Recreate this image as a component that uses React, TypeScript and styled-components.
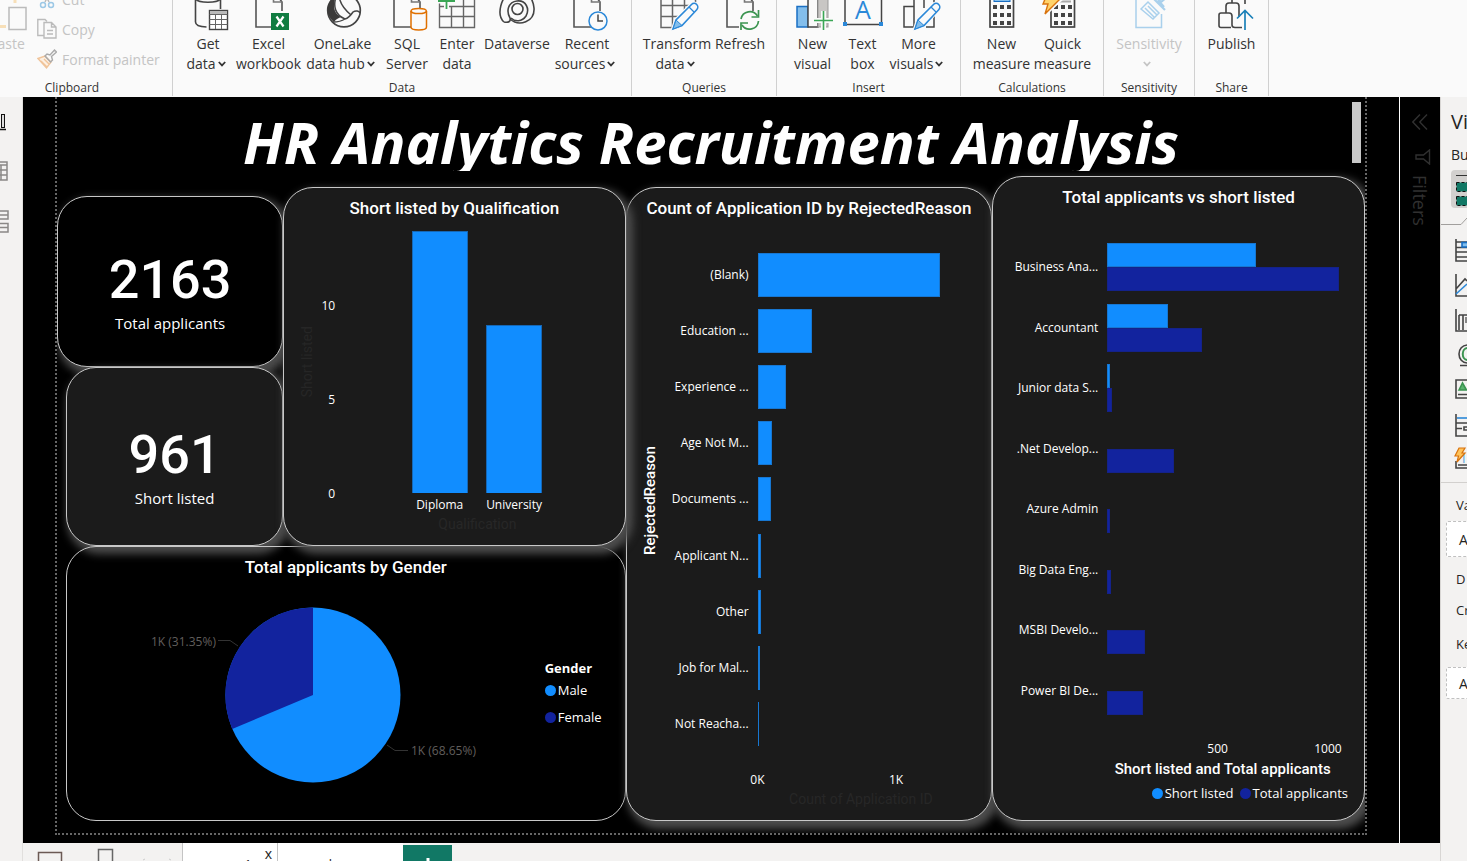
import React from "react";
import styled, { createGlobalStyle } from "styled-components";

const UI = `"Open Sans", "Noto Sans", sans-serif`;
const DIN = `Roboto, "Liberation Sans", sans-serif`;
const BRIGHT = "#118dff";
const NAVY = "#12239e";

const Global = createGlobalStyle`
  *, *::before, *::after { box-sizing: border-box; }
  body { margin: 0; font-family: ${UI}; background: #f3f2f1; }
  button { font: inherit; color: inherit; border: 0; padding: 0; background: none; }
  h1, h2, h3, p, ul, ol, dl, dd, dt { margin: 0; padding: 0; font-weight: inherit; font-size: inherit; }
  li { list-style: none; }
`;

const Shell = styled.div`
  display: flex;
  flex-direction: column;
  height: 100vh;
  overflow: hidden;
`;

/* ---------- ribbon ---------- */

const Ribbon = styled.header`
  display: flex;
  align-items: flex-end;
  flex: none;
  height: 97px;
  overflow: hidden;
  background: #fafafa;
  color: #333;
`;

const Group = styled.section<{ $w: number; $pull?: number }>`
  display: flex;
  flex-direction: column;
  justify-content: flex-end;
  flex: none;
  width: ${(p) => p.$w}px;
  height: 120px;
  margin-left: ${(p) => (p.$pull ? -p.$pull : 0)}px;
  margin-bottom: 1px;
  border-right: 1px solid #d0d0d0;
`;

const GroupBody = styled.div`
  display: flex;
  align-items: flex-start;
  justify-content: center;
`;

const GroupName = styled.h2`
  font-size: 12px;
  line-height: 16px;
  margin-top: 6px;
  text-align: center;
`;

const Tool = styled.button<{ $w: number; $off?: boolean }>`
  display: flex;
  flex-direction: column;
  align-items: center;
  width: ${(p) => p.$w}px;
  height: 80px;
  font-size: 14px;
  line-height: 20px;
  white-space: nowrap;
  color: ${(p) => (p.$off ? "#c4c4c4" : "#333")};
  svg { flex: none; overflow: visible; }
`;

const ToolIcon = styled.svg`
  width: 40px;
  height: 36px;
  margin-bottom: 4px;
`;

const ToolLine = styled.span<{ $menu?: boolean }>`
  display: flex;
  align-items: center;
  gap: 2px;
  height: 20px;
  padding-right: ${(p) => (p.$menu ? 4 : 0)}px;
`;

const ClipBody = styled(GroupBody)`
  justify-content: flex-start;
  align-items: flex-end;
  padding-left: 15px;
`;

const ClipList = styled.div`
  display: flex;
  flex-direction: column;
  margin-left: 10px;
`;

const ClipButton = styled.button`
  display: flex;
  align-items: center;
  gap: 5px;
  height: 30px;
  font-size: 14px;
  color: #c4c4c4;
`;

const Chevron = () => (
  <svg width="8" height="6" viewBox="0 0 8 6" fill="none" stroke="currentColor" strokeWidth="1.8">
    <path d="M.8 1 4 4.4 7.2 1" />
  </svg>
);

const Doc = () => (
  <g fill="none" stroke="#555" strokeWidth="1.6">
    <path d="M24 33H7V-4H24L33 8V17" />
    <path d="M24.500-4V8H33" stroke="#777" />
  </g>
);

const Pencil = () => (
  <g>
    <path d="M16 35l3-9L34.500 10.500a3.500 3.500 0 0 1 5 5L25 31z" fill="#fafafa" stroke="#fafafa" strokeWidth="4" />
    <path d="M16 35l3-9L34.500 10.500a3.500 3.500 0 0 1 5.200 5.200L25 31.500z" fill="#fafafa" stroke="#2b88d8" strokeWidth="1.600" />
    <path d="M16 35l3-9 6 5.500z" fill="#83beec" stroke="#2b88d8" />
    <path d="M32 13l5 5" stroke="#2b88d8" strokeWidth="1.300" />
  </g>
);

const CalcKeys = () => (
  <g fill="#444">
    {[11, 19, 27].map((y) => [11, 18, 25].map((x) => <rect key={`${x}-${y}`} x={x} y={y} width="4" height="4" />))}
  </g>
);

const icons: Record<string, React.ReactNode> = {
  get: (
    <>
      <g fill="none" stroke="#444" strokeWidth="1.600">
        <path d="M7.500 3V28c0 3 5 4.800 11 5M32.500 3V15" />
        <path d="M7.500 4c0 5.600 25 5.600 25 0" />
      </g>
      <rect x="21.500" y="16.500" width="18" height="19" fill="#fff" stroke="#444" strokeWidth="1.400" />
      <rect x="22" y="17" width="17" height="3.500" fill="#bbb" />
      <path d="M21.500 20.500h18M21.500 25.500h18M21.500 30.500h18M27.500 20v15M33.500 20v15" stroke="#666" fill="none" />
    </>
  ),
  excel: (
    <>
      <Doc />
      <rect x="22" y="19" width="18" height="17" fill="#107c41" />
      <path d="M27.500 22.500l7 10M34.500 22.500l-7 10" stroke="#fff" strokeWidth="2.200" />
    </>
  ),
  lake: (
    <>
      <circle cx="21" cy="16.500" r="16.300" fill="none" stroke="#444" strokeWidth="1.700" />
      <path d="M10 4C2 11 3 22 11 28c2-3 5-4 7-5C11 20 9 11 13 3z" fill="#3b3a39" />
      <path d="M13 3c-3 9-1 18 9 22 4-1 6-4 8-7 3-2 6-1 7 1M10 28c4 0 9-1 12-3M16 2c1 8 6 14 12 19" fill="none" stroke="#444" strokeWidth="1.500" />
    </>
  ),
  sql: (
    <>
      <Doc />
      <path d="M24 17v16c0 4 15.500 4 15.500 0V17" fill="#fafafa" stroke="#e07000" strokeWidth="1.500" />
      <ellipse cx="31.700" cy="17" rx="7.700" ry="2.600" fill="#fafafa" stroke="#e07000" strokeWidth="1.500" />
    </>
  ),
  enter: (
    <>
      <path d="M2.500 8V33.500h35V-2M2.500 22.500h35M14.500 12v21M26.500 0v33M2.500 12.500h35" fill="none" stroke="#666" strokeWidth="1.400" />
      <path d="M9.500-2v17M1 7h17" stroke="#fafafa" strokeWidth="5" />
      <path d="M9.500-2v17M1 7h17" stroke="#3aa655" strokeWidth="1.800" />
    </>
  ),
  verse: (
    <g fill="none" stroke="#444" strokeWidth="1.600">
      <circle cx="20.500" cy="15" r="5.500" />
      <path d="M7 28C-1 21 4 3 14-3M7 28c5 1 7-1 6-4-4-7-2-16 7-17 9-1 13 8 9 15-4 6-11 6-15 2" />
      <path d="M13 25c9 8 25 3 24-11C36 5 31-1 25-3" />
    </g>
  ),
  recent: (
    <>
      <Doc />
      <circle cx="31" cy="27" r="9" fill="#fafafa" stroke="#2b88d8" strokeWidth="1.500" />
      <path d="M31 20.500V27h5" fill="none" stroke="#444" strokeWidth="1.500" />
    </>
  ),
  transform: (
    <>
      <path d="M4 0V33.500H22M4 22.500h20M4 11.500h34M15.500 0v33M27.500 0v18M38.500 0v10" fill="none" stroke="#666" strokeWidth="1.500" />
      <Pencil />
    </>
  ),
  refresh: (
    <>
      <Doc />
      <rect x="19" y="17" width="21" height="19" fill="#fafafa" />
      <path d="M21 25a9 9 0 0 1 16.500-3M38.500 27a9 9 0 0 1-16.500 4" fill="none" stroke="#3b9450" strokeWidth="1.700" />
      <path d="M38.500 16v7h-7M21 36v-7h7" fill="none" stroke="#3b9450" strokeWidth="1.700" />
    </>
  ),
  visual: (
    <>
      <rect x="4" y="12.500" width="11" height="20.500" fill="#83beec" stroke="#1a6fc4" strokeWidth="1.500" />
      <rect x="15" y="-4" width="10" height="37" fill="#fafafa" stroke="#444" strokeWidth="1.500" />
      <rect x="25" y="0" width="10" height="33" fill="#c8c6c4" stroke="#999" />
      <path d="M30.500 17v19M21 26.500h19" stroke="#fafafa" strokeWidth="5" />
      <path d="M30.500 17v19M21 26.500h19" stroke="#3aa655" strokeWidth="1.600" />
    </>
  ),
  textbox: (
    <>
      <path d="M2 0V30.500H38.500V0" fill="none" stroke="#444" strokeWidth="1.500" />
      <rect x="0" y="28" width="4" height="4" fill="#2b88d8" />
      <rect x="36" y="28" width="4" height="4" fill="#2b88d8" />
      <text x="20" y="25" textAnchor="middle" fontSize="25" fontFamily={UI} fill="#2b88d8">A</text>
    </>
  ),
  more: (
    <>
      <g fill="none" stroke="#444" strokeWidth="1.500">
        <path d="M5 12.500h10V33H5zM15-4V33M25-4V14M25 0h10v10M27 33h8V22" />
      </g>
      <Pencil />
    </>
  ),
  measure: (
    <>
      <rect x="8" y="-4" width="23.500" height="37" fill="none" stroke="#444" strokeWidth="1.700" />
      <rect x="12" y="0" width="16" height="7.500" fill="#83beec" stroke="#1a6fc4" />
      <CalcKeys />
    </>
  ),
  quick: (
    <>
      <rect x="8" y="-4" width="23.500" height="37" fill="none" stroke="#444" strokeWidth="1.700" />
      <path d="M16 7.500h12" stroke="#aaa" strokeWidth="2" />
      <CalcKeys />
      <path d="M4-2h12l-4 7h6L2 20l3-10H0z" fill="#ffd36b" stroke="#fafafa" strokeWidth="4" />
      <path d="M5-2h11l-4 7h5L2 20l3-10H0z" fill="#ffd36b" stroke="#d9730d" strokeWidth="1.400" />
    </>
  ),
  sensitivity: (
    <g fill="none" stroke="#a9d0ec" strokeWidth="1.500">
      <path d="M7 0V33.500H32.500V20" />
      <path d="M12 15l7-7 11 11-6 6zM16 14l9 9M19 12l9 9" />
      <path d="M24 4l12 12M22-2l10 10 6-5M29 6l6 7" strokeWidth="2.200" />
    </g>
  ),
  publish: (
    <>
      <g fill="none" stroke="#444" strokeWidth="1.600">
        <path d="M19 33.500H9q-2 0-2-2V21q0-2 2-2h8q3 0 3 3v9q0 2.500 3 2.500h7" />
        <path d="M14 19v-7q0-3 3-3h7q3 0 3 3v11M20 9V0M33 0v10" />
      </g>
      <path d="M33 36V17M25 24.500L33 16.500l8 8" fill="none" stroke="#1a80b8" strokeWidth="1.700" />
    </>
  ),
  paste: (
    <>
      <path d="M28 0v9M0 32.500h19" fill="none" stroke="#f7dfb8" strokeWidth="3" />
      <rect x="22" y="13.500" width="17" height="22" fill="#fafafa" stroke="#bbb" strokeWidth="1.500" />
    </>
  ),
};

type ToolSpec = { icon: string; lines: string[]; w: number; menu?: boolean; off?: boolean };

const ribbonGroups: { name: string; w: number; tools: ToolSpec[] }[] = [
  {
    name: "Data",
    w: 459,
    tools: [
      { icon: "get", lines: ["Get", "data"], w: 50, menu: true },
      { icon: "excel", lines: ["Excel", "workbook"], w: 71 },
      { icon: "lake", lines: ["OneLake", "data hub"], w: 77, menu: true },
      { icon: "sql", lines: ["SQL", "Server"], w: 52 },
      { icon: "enter", lines: ["Enter", "data"], w: 48 },
      { icon: "verse", lines: ["Dataverse"], w: 72 },
      { icon: "recent", lines: ["Recent", "sources"], w: 68, menu: true },
    ],
  },
  {
    name: "Queries",
    w: 145,
    tools: [
      { icon: "transform", lines: ["Transform", "data"], w: 72, menu: true },
      { icon: "refresh", lines: ["Refresh"], w: 54 },
    ],
  },
  {
    name: "Insert",
    w: 184,
    tools: [
      { icon: "visual", lines: ["New", "visual"], w: 52 },
      { icon: "textbox", lines: ["Text", "box"], w: 48 },
      { icon: "more", lines: ["More", "visuals"], w: 64, menu: true },
    ],
  },
  {
    name: "Calculations",
    w: 143,
    tools: [
      { icon: "measure", lines: ["New", "measure"], w: 61 },
      { icon: "quick", lines: ["Quick", "measure"], w: 61 },
    ],
  },
  { name: "Sensitivity", w: 91, tools: [{ icon: "sensitivity", lines: ["Sensitivity", ""], w: 70, menu: true, off: true }] },
  { name: "Share", w: 74, tools: [{ icon: "publish", lines: ["Publish"], w: 54 }] },
];

const RibbonTool = ({ icon, lines, w, menu, off }: ToolSpec) => (
  <Tool $w={w} $off={off} disabled={off}>
    <ToolIcon viewBox="0 0 40 36">{icons[icon]}</ToolIcon>
    {lines.map((line, i) => {
      const last = menu && i === lines.length - 1;
      return (
        <ToolLine key={i} $menu={last}>
          {line}
          {last && <Chevron />}
        </ToolLine>
      );
    })}
  </Tool>
);

/* ---------- workspace ---------- */

const Workspace = styled.div`
  display: flex;
  flex: 1;
  min-height: 0;
`;

const Rail = styled.nav`
  display: flex;
  flex-direction: column;
  flex: none;
  gap: 26px;
  width: 23px;
  padding-top: 13px;
  overflow: hidden;
  border-right: 1px solid #e1dfdd;
  background: #f3f2f1;
`;

const RailButton = styled.button`
  width: 22px;
  height: 24px;
  svg { display: block; }
`;

const Center = styled.main`
  display: flex;
  flex-direction: column;
  flex: 1;
  min-width: 0;
`;

const Stage = styled.div`
  display: flex;
  flex: 1;
  min-height: 0;
  background: #000;
`;

const ReportArea = styled.div`
  display: flex;
  flex: 1;
  min-width: 0;
  padding: 0 32px 8px;
`;

const Page = styled.article`
  display: flex;
  flex-direction: column;
  flex: 1;
  min-width: 0;
  overflow: hidden;
  border: 2px dotted #666;
  border-top: 0;
  color: #fff;
`;

const TitleBox = styled.div`
  position: relative;
  flex: none;
  height: 74px;
  overflow: hidden;
`;

const Title = styled.h1`
  font: italic 700 58px/90px ${UI};
  text-align: center;
  white-space: nowrap;
`;

const Thumb = styled.div`
  position: absolute;
  top: 5px;
  right: 4px;
  width: 9px;
  height: 61px;
  background: #c8c8c8;
`;

const Board = styled.div`
  display: grid;
  grid-template-columns: 569fr 367fr 373fr;
  flex: 1;
  min-height: 0;
  padding-bottom: 12px;
`;

const LeftArea = styled.div`
  display: grid;
  grid-template-rows: minmax(0, 359fr) minmax(0, 275fr);
  min-width: 0;
  padding-top: 16px;
`;

const TopLeft = styled.div`
  display: grid;
  grid-template-columns: 226fr 342fr;
  min-height: 0;
`;

const CardStack = styled.div`
  display: grid;
  grid-template-rows: minmax(0, 171fr) minmax(0, 179fr);
  padding-top: 9px;
`;

const Visual = styled.section<{ $fill?: string; $glow?: boolean; $level?: number; $top?: number; $left?: number }>`
  position: relative;
  z-index: ${(p) => p.$level ?? 0};
  display: flex;
  flex-direction: column;
  min-width: 0;
  min-height: 0;
  margin-top: ${(p) => p.$top ?? 0}px;
  margin-left: ${(p) => p.$left ?? 0}px;
  border: 1px solid #c8c8c8;
  border-radius: 30px;
  background: ${(p) => p.$fill ?? "#1b1b1b"};
  box-shadow: ${(p) => (p.$glow ? "4px 5px 9px 3px #4d4d4d" : "none")};
`;

const Card = styled(Visual)`
  align-items: center;
  justify-content: center;
  padding-top: 23px;
`;

const Figure = styled.strong`
  font: 500 54px/56px ${DIN};
`;

const FigureName = styled.span`
  margin-top: 4px;
  font-size: 15px;
  line-height: 22px;
`;

const VisualTitle = styled.h2`
  flex: none;
  margin-top: 9px;
  font: 500 17px/22px ${DIN};
  text-align: center;
  white-space: nowrap;
`;

/* column chart */

const Columns = styled.div`
  display: grid;
  flex: none;
  height: 281px;
  margin-top: 12px;
  grid-template-rows: repeat(15, minmax(0, 1fr));
  grid-template-columns: 35px 16px 76fr 56fr 18fr 56fr 82fr;
  font-size: 12px;
`;

const YName = styled.div`
  grid-row: 1 / 15;
  grid-column: 1;
  display: flex;
  align-items: center;
  justify-content: center;
  padding-right: 10px;
  font: 400 14px/18px ${DIN};
  writing-mode: vertical-rl;
  transform: rotate(180deg);
  color: #262626;
`;

const YTick = styled.span<{ $row: number }>`
  grid-row: ${(p) => p.$row} / span 2;
  grid-column: 2;
  align-self: center;
  justify-self: end;
`;

const ColumnBar = styled.div<{ $col: number; $value: number }>`
  grid-row: ${(p) => 15 - p.$value} / 15;
  grid-column: ${(p) => p.$col};
  background: ${BRIGHT};
  border: 1px solid #1667b5;
  border-bottom: 0;
`;

const ColumnName = styled.span<{ $col: number }>`
  grid-row: 15;
  grid-column: ${(p) => p.$col};
  display: flex;
  justify-content: center;
  line-height: 24px;
`;

const FaintName = styled.p<{ $left: number; $top?: number }>`
  margin-top: ${(p) => p.$top ?? 0}px;
  margin-left: ${(p) => p.$left}px;
  font: 400 14px/18px ${DIN};
  text-align: center;
  color: #272727;
`;

/* bar charts */

const Bars = styled.ul<{ $top: number; $h: number }>`
  display: flex;
  flex-direction: column;
  flex: none;
  height: ${(p) => p.$h}px;
  margin-top: ${(p) => p.$top}px;
`;

const BarRow = styled.li<{ $label: number; $right: number }>`
  display: grid;
  grid-template-columns: ${(p) => p.$label}px 1fr;
  column-gap: 9px;
  align-items: center;
  flex: 1;
  padding-right: ${(p) => p.$right}px;
`;

const BarName = styled.span`
  font-size: 12px;
  line-height: 16px;
  text-align: right;
  white-space: nowrap;
`;

const Pair = styled.div`
  display: flex;
  flex-direction: column;
  align-items: flex-start;
`;

const Bar = styled.div<{ $h: number; $dark?: boolean }>`
  height: ${(p) => p.$h}px;
  background: ${(p) => (p.$dark ? NAVY : BRIGHT)};
  box-shadow: inset 0 0 0 1px ${(p) => (p.$dark ? "#14228a" : "#1777d2")};
`;

const Axis = styled.div<{ $left: number; $right: number; $n: number; $top: number }>`
  display: grid;
  grid-template-columns: repeat(${(p) => p.$n}, minmax(0, 1fr));
  margin: ${(p) => p.$top}px ${(p) => p.$right}px 0 ${(p) => p.$left}px;
  font-size: 12px;
  line-height: 18px;
`;

const AxisTick = styled.span<{ $at: number }>`
  grid-column: ${(p) => p.$at} / span 2;
  display: flex;
  justify-content: center;
`;

const RejectBody = styled.div`
  display: grid;
  grid-template-columns: 34px 1fr;
  flex: none;
`;

const RejectName = styled.div`
  display: flex;
  align-items: center;
  justify-content: center;
  padding: 0 12px 30px 0;
  font: 500 15px/20px ${DIN};
  writing-mode: vertical-rl;
  transform: rotate(180deg);
`;

const AxisName = styled.p`
  margin-left: 88px;
  font: 500 15px/22px ${DIN};
  text-align: center;
`;

const Legend = styled.ul<{ $column?: boolean }>`
  display: flex;
  flex-direction: ${(p) => (p.$column ? "column" : "row")};
  gap: ${(p) => (p.$column ? 7 : 6)}px;
  justify-content: flex-end;
  font-size: 13px;
  line-height: 20px;
`;

const LegendItem = styled.li<{ $color: string }>`
  display: flex;
  align-items: center;
  gap: 2px;
  white-space: nowrap;
  &::before {
    content: "";
    width: 11px;
    height: 11px;
    border-radius: 50%;
    background: ${(p) => p.$color};
  }
`;

const BottomLegend = styled.div`
  margin: 3px 16px 0 0;
`;

const PieRow = styled.div`
  display: flex;
  align-items: center;
  flex: 1;
  padding: 0 23px 8px 15px;
`;

const PieBox = styled.div`
  display: flex;
  justify-content: center;
  flex: 1;
  svg { overflow: visible; }
  text { font-size: 12px; font-family: ${UI}; fill: #605e5c; }
`;

const PieLegend = styled.div`
  padding-bottom: 6px;
`;

const LegendTitle = styled.h3`
  font-size: 13px;
  font-weight: 700;
  line-height: 22px;
  margin-bottom: 1px;
`;

const reasons: [string, number][] = [
  ["(Blank)", 1320],
  ["Education ...", 394],
  ["Experience ...", 202],
  ["Age Not M...", 102],
  ["Documents ...", 94],
  ["Applicant N...", 28],
  ["Other", 22],
  ["Job for Mal...", 18],
  ["Not Reacha...", 12],
];

const jobs: [string, number, number][] = [
  ["Business Ana...", 673, 1050],
  ["Accountant", 275, 430],
  ["Junior data S...", 12, 20],
  [".Net Develop...", 0, 304],
  ["Azure Admin", 0, 12],
  ["Big Data Eng...", 0, 16],
  ["MSBI Develo...", 0, 171],
  ["Power BI De...", 0, 162],
];

/* ---------- filters pane ---------- */

const Filters = styled.aside`
  display: flex;
  flex-direction: column;
  align-items: center;
  flex: none;
  width: 41px;
  padding-top: 16px;
  border-left: 1px solid #fff;
  color: #303030;
`;

const FiltersName = styled.h2`
  margin-top: 9px;
  font-size: 18px;
  line-height: 24px;
  writing-mode: vertical-rl;
`;

const PlainButton = styled.button<{ $top?: number }>`
  flex: none;
  height: 18px;
  margin-top: ${(p) => p.$top ?? 0}px;
  svg { display: block; }
`;

/* ---------- page tabs ---------- */

const Tabs = styled.footer`
  display: flex;
  flex: none;
  height: 18px;
  overflow: hidden;
  background: #f3f2f1;
`;

const ViewModes = styled.div`
  width: 159px;
  flex: none;
  svg { display: block; }
`;

const Tab = styled.button<{ $w: number; $pad: number }>`
  display: flex;
  align-items: flex-start;
  justify-content: flex-end;
  gap: 13px;
  flex: none;
  width: ${(p) => p.$w}px;
  height: 42px;
  padding-right: ${(p) => p.$pad}px;
  border-left: 1px solid #c4c4c4;
  background: #fff;
  font-size: 13px;
  line-height: 42px;
  color: #222;
`;

const CloseMark = styled.span`
  font-size: 14px;
  line-height: 22px;
`;

const AddTab = styled.button`
  flex: none;
  width: 49px;
  height: 40px;
  margin-top: 2px;
  background: #117865;
  svg { display: block; margin: 13px auto; }
`;

/* ---------- visualizations pane ---------- */

const VizPane = styled.aside`
  display: flex;
  flex-direction: column;
  flex: none;
  width: 27px;
  overflow: hidden;
  border-left: 1px solid #d8d6d4;
  background: #f3f2f1;
  color: #252423;
  white-space: nowrap;
`;

const VizTitle = styled.h2`
  margin: 11px 0 0 10px;
  font-size: 20px;
  line-height: 28px;
`;

const VizSub = styled.h3`
  margin: 9px 0 5px 10px;
  font-size: 14px;
  line-height: 20px;
`;

const BuildTab = styled.button`
  flex: none;
  width: 44px;
  height: 38px;
  margin-left: 10px;
  border-radius: 4px;
  background: #d2d0ce;
  svg { display: block; margin-left: 5px; }
`;

const VizGallery = styled.svg`
  display: block;
  flex: none;
  width: 26px;
  height: 276px;
`;

const FieldName = styled.p<{ $top: number }>`
  margin: ${(p) => p.$top}px 0 0 15px;
  font-size: 13px;
  line-height: 20px;
`;

const Well = styled.div<{ $top: number; $h: number }>`
  display: flex;
  align-items: center;
  flex: none;
  width: 60px;
  height: ${(p) => p.$h}px;
  margin: ${(p) => p.$top}px 0 0 5px;
  padding-left: 12px;
  border: 1px dashed #c0c0c0;
  border-radius: 2px;
  background: #fff;
  font-size: 14px;
`;

export default function App() {
  return (
    <Shell>
      <Global />
      <Ribbon>
        <Group $w={201} $pull={28}>
          <ClipBody>
            <Tool $w={40} $off disabled>
              <ToolIcon viewBox="0 0 40 36">{icons.paste}</ToolIcon>
              <ToolLine>Paste</ToolLine>
            </Tool>
            <ClipList>
              <ClipButton disabled>
                <svg width="20" height="22" viewBox="0 0 20 22" fill="none" strokeWidth="1.5">
                  <path d="M5 0l7 14M15 0L8 14" stroke="#bbb" />
                  <circle cx="6" cy="17" r="2.500" stroke="#9cc8e6" />
                  <circle cx="14" cy="17" r="2.500" stroke="#9cc8e6" />
                </svg>
                Cut
              </ClipButton>
              <ClipButton disabled>
                <svg width="20" height="22" viewBox="0 0 20 22" fill="#fafafa" stroke="#bbb" strokeWidth="1.400">
                  <path d="M8 17.500H.8V1.500H8l2 2" />
                  <path d="M7 4.500h7.500l4.500 4.500v11H7zM14.500 4.500V9H19M10 12.500h6M10 16h6" />
                </svg>
                Copy
              </ClipButton>
              <ClipButton disabled>
                <svg width="20" height="22" viewBox="0 0 20 22" fill="none" strokeWidth="1.400">
                  <path d="M1 10.500l7-2.500 6 6-4.500 6z" stroke="#f0c49a" fill="#fdf0e2" />
                  <path d="M4 13l6 6M7 11l5 5" stroke="#f0c49a" />
                  <path d="M8 8l2-2 3 1 4.500-5 2 2-5 4.500L15.500 12l-2 2z" stroke="#aaa" />
                </svg>
                Format painter
              </ClipButton>
            </ClipList>
          </ClipBody>
          <GroupName>Clipboard</GroupName>
        </Group>
        {ribbonGroups.map((g) => (
          <Group key={g.name} $w={g.w}>
            <GroupBody>
              {g.tools.map((t) => (
                <RibbonTool key={t.icon} {...t} />
              ))}
            </GroupBody>
            <GroupName>{g.name}</GroupName>
          </Group>
        ))}
      </Ribbon>

      <Workspace>
        <Rail>
          <RailButton aria-label="Report view">
            <svg width="22" height="24" viewBox="0 0 22 24">
              <rect x="1.500" y="4.500" width="3" height="13" fill="#ddd" stroke="#111" />
              <path d="M0 19.500h6" stroke="#111" strokeWidth="1.500" />
            </svg>
          </RailButton>
          <RailButton aria-label="Table view">
            <svg width="22" height="24" viewBox="0 0 22 24" fill="none" stroke="#8a8886" strokeWidth="1.500">
              <path d="M0 2H7V20H0M0 5H7M0 10H7M0 15H7M1 5V20" />
            </svg>
          </RailButton>
          <RailButton aria-label="Model view">
            <svg width="22" height="24" viewBox="0 0 22 24" fill="none" stroke="#8a8886" strokeWidth="1.500">
              <path d="M0 1H8V9H0M0 5H8M0 13.500H8V22H0M0 17.500H8" />
            </svg>
          </RailButton>
        </Rail>

        <Center>
          <Stage>
            <ReportArea>
              <Page>
                <TitleBox>
                  <Title>HR Analytics Recruitment Analysis</Title>
                  <Thumb />
                </TitleBox>
                <Board>
                  <LeftArea>
                    <TopLeft>
                      <CardStack>
                        <Card $fill="#000" $glow>
                          <Figure>2163</Figure>
                          <FigureName>Total applicants</FigureName>
                        </Card>
                        <Card $glow $left={9}>
                          <Figure>961</Figure>
                          <FigureName>Short listed</FigureName>
                        </Card>
                      </CardStack>
                      <Visual $glow $level={3}>
                        <VisualTitle>Short listed by Qualification</VisualTitle>
                        <Columns>
                          <YName>Short listed</YName>
                          <YTick $row={4}>10</YTick>
                          <YTick $row={9}>5</YTick>
                          <YTick $row={14}>0</YTick>
                          <ColumnBar $col={4} $value={14} />
                          <ColumnBar $col={6} $value={9} />
                          <ColumnName $col={4}>Diploma</ColumnName>
                          <ColumnName $col={6}>University</ColumnName>
                        </Columns>
                        <FaintName $left={46} $top={3}>Qualification</FaintName>
                      </Visual>
                    </TopLeft>
                    <Visual $fill="transparent" $left={9}>
                      <VisualTitle>Total applicants by Gender</VisualTitle>
                      <PieRow>
                        <PieBox>
                          <svg width="324" height="176" viewBox="0 0 324 176">
                            <circle cx="162" cy="88" r="87.500" fill={BRIGHT} />
                            <path d="M162 88V.5A87.500 87.500 0 0 0 81.200 122z" fill={NAVY} />
                            <path d="M67 33.500h12l8 5.500M236 138l8 5.500h13" fill="none" stroke="#333" />
                            <text x="0" y="39">1K (31.35%)</text>
                            <text x="260" y="148">1K (68.65%)</text>
                          </svg>
                        </PieBox>
                        <PieLegend>
                          <LegendTitle>Gender</LegendTitle>
                          <Legend $column>
                            <LegendItem $color={BRIGHT}>Male</LegendItem>
                            <LegendItem $color={NAVY}>Female</LegendItem>
                          </Legend>
                        </PieLegend>
                      </PieRow>
                    </Visual>
                  </LeftArea>

                  <Visual $glow $level={1} $top={16}>
                    <VisualTitle>Count of Application ID by RejectedReason</VisualTitle>
                    <RejectBody>
                      <RejectName>RejectedReason</RejectName>
                      <Bars $top={28} $h={505}>
                        {reasons.map(([name, count]) => (
                          <BarRow key={name} $label={88} $right={12}>
                            <BarName>{name}</BarName>
                            <Bar $h={44} style={{ width: `${count / 16}%` }} />
                          </BarRow>
                        ))}
                      </Bars>
                    </RejectBody>
                    <Axis $left={117} $right={12} $n={17} $top={19}>
                      <AxisTick $at={1}>0K</AxisTick>
                      <AxisTick $at={11}>1K</AxisTick>
                    </Axis>
                    <FaintName $left={104} $top={1}>Count of Application ID</FaintName>
                  </Visual>

                  <Visual $glow $level={2} $top={5}>
                    <VisualTitle>Total applicants vs short listed</VisualTitle>
                    <Bars $top={29} $h={484}>
                      {jobs.map(([name, short, total]) => (
                        <BarRow key={name} $label={105} $right={14}>
                          <BarName>{name}</BarName>
                          <Pair>
                            <Bar $h={24} style={{ width: `${short / 11}%` }} />
                            <Bar $h={24} $dark style={{ width: `${total / 11}%` }} />
                          </Pair>
                        </BarRow>
                      ))}
                    </Bars>
                    <Axis $left={114} $right={14} $n={11} $top={19}>
                      <AxisTick $at={5}>500</AxisTick>
                      <AxisTick $at={10}>1000</AxisTick>
                    </Axis>
                    <AxisName>Short listed and Total applicants</AxisName>
                    <BottomLegend>
                      <Legend>
                        <LegendItem $color={BRIGHT}>Short listed</LegendItem>
                        <LegendItem $color={NAVY}>Total applicants</LegendItem>
                      </Legend>
                    </BottomLegend>
                  </Visual>
                </Board>
              </Page>
            </ReportArea>

            <Filters>
              <PlainButton aria-label="Expand filters">
                <svg width="16" height="16" viewBox="0 0 16 16" fill="none" stroke="currentColor" strokeWidth="1.400">
                  <path d="M8 .5L.8 8 8 15.500M15 .5L7.800 8l7.200 7.500" />
                </svg>
              </PlainButton>
              <PlainButton aria-label="Filter" $top={17}>
                <svg width="22" height="16" viewBox="0 0 22 16" fill="none" stroke="currentColor" strokeWidth="1.400">
                  <path d="M20.500 1v14l-6-5H7V6h7.500z" />
                </svg>
              </PlainButton>
              <FiltersName>Filters</FiltersName>
            </Filters>
          </Stage>

          <Tabs>
            <ViewModes>
              <svg width="159" height="18" viewBox="0 0 159 18" fill="none">
                <path d="M15.500 18V9.500H38.500V18" stroke="#6b5a55" strokeWidth="1.500" />
                <path d="M75.500 18V6.500H89.500V18" stroke="#666" strokeWidth="1.500" />
                <path d="M120 17l2-1M146 16l2 1" stroke="#ccc" />
              </svg>
            </ViewModes>
            <Tab $w={95} $pad={5}>
              1<CloseMark>x</CloseMark>
            </Tab>
            <Tab $w={126} $pad={71}>
              l
            </Tab>
            <AddTab aria-label="New page">
              <svg width="14" height="14" viewBox="0 0 14 14" stroke="#fff" strokeWidth="3">
                <path d="M7 0v14M0 7h14" />
              </svg>
            </AddTab>
          </Tabs>
        </Center>

        <VizPane>
          <VizTitle>Vi</VizTitle>
          <VizSub>Bu</VizSub>
          <BuildTab aria-label="Build visual">
            <svg width="30" height="34" viewBox="0 0 30 34">
              <path d="M0 3.500h30" stroke="#333" />
              <rect x=".5" y="10.500" width="30" height="9" fill="#117865" stroke="#111" strokeDasharray="3 2" />
              <rect x=".5" y="24.500" width="30" height="9" fill="#117865" stroke="#111" strokeDasharray="3 2" />
            </svg>
          </BuildTab>
          <VizGallery viewBox="0 -1 26 276" fill="none" stroke="#444" strokeWidth="1.600">
            <path d="M0 15.500H20L26 9" stroke="#a19f9d" strokeWidth="1" />
            <path d="M15 30V52H26M15 33h11M15 38.500h11M15 43h11M15 48h11" />
            <rect x="21" y="33.500" width="6" height="4.500" fill="#83beec" stroke="#1a6fc4" />
            <path d="M15 65V87H26M15 80l9-10 2 2" />
            <path d="M15 85l11-10" stroke="#2b88d8" />
            <path d="M15 100V122H26M18 106v15M22 106v15M18 106h8" />
            <path d="M24 108h3v6h-3z" fill="#888" stroke="none" />
            <path d="M27 136c-12 0-12 18 0 18M19 156.500h8" />
            <path d="M27 139c-7 0-7 12 0 12" stroke="#3b9450" strokeWidth="2" />
            <path d="M26 171H15v18H26M17 185.500h9" />
            <path d="M18 181l3.500-7 4 7z" fill="#5bb36e" stroke="#3b9450" />
            <path d="M15 205V227H26M15 214h11M15 219.500h6M26 218h-3v3h3" />
            <path d="M16 209h10" stroke="#2b88d8" />
            <path d="M15 252v7H26M17 256h9" />
            <text x="19" y="254" fontSize="12" fontFamily={UI} fill="#4aa0dc" stroke="none">1</text>
            <path d="M18 239h6l-3 5h3l-8 9 1.500-6H14z" fill="#ffc35a" stroke="#d9730d" strokeWidth="1.200" />
            <path d="M0 273.500H26" stroke="#d2d0ce" strokeWidth="1" />
          </VizGallery>
          <FieldName $top={11}>Va</FieldName>
          <Well $top={6} $h={36}>A</Well>
          <FieldName $top={12}>D</FieldName>
          <FieldName $top={11}>Cr</FieldName>
          <FieldName $top={14}>Ke</FieldName>
          <Well $top={13} $h={32}>A</Well>
        </VizPane>
      </Workspace>
    </Shell>
  );
}
